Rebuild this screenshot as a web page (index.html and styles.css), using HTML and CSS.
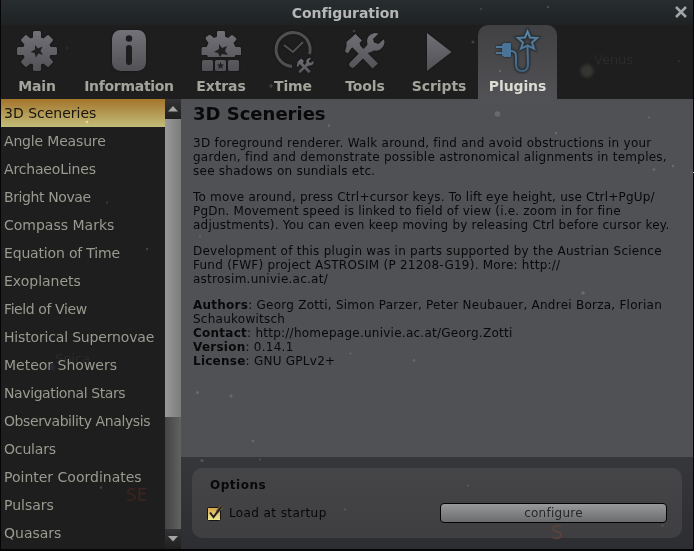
FILE: index.html
```
<!DOCTYPE html>
<html lang="en">
<head>
<meta charset="utf-8">
<title>Configuration</title>
<link rel="stylesheet" href="styles.css">
</head>
<body>
<svg width="0" height="0" class="defs">
  <defs>
    <linearGradient id="metal" gradientUnits="userSpaceOnUse" x1="0" y1="3" x2="0" y2="45"><stop offset="0" stop-color="#727278"/><stop offset="1" stop-color="#505055"/></linearGradient>
    <linearGradient id="blue" gradientUnits="userSpaceOnUse" x1="0" y1="3" x2="0" y2="45"><stop offset="0" stop-color="#5d86a7"/><stop offset="1" stop-color="#41637f"/></linearGradient>
    <g id="tools">
      <path d="M11.500 37.500L29 20" stroke="url(#metal)" stroke-width="6.500" stroke-linecap="round"/>
      <path d="M4 24.500L5.500 19L5.500 15L14.500 7L21 13.500L18.500 16L19.500 19L37 36.500L31.500 41.500L14 23L11.500 20.500L10 21.500L7 26.500Z" fill="url(#metal)"/>
      <path d="M37.500 6.500L33.500 6C28 7.500 25 11 26.500 17L25 22L29 25.500L33 23.500C39 24.500 43.500 20 43.500 14L42.500 12.500L37.500 17L33 15.500L32 12Z" fill="url(#metal)"/>
    </g>
  </defs>
</svg>
<div class="window">
  <header class="title"><h1>Configuration</h1>
    <svg class="close" width="12" height="12" viewBox="0 0 12 12"><path d="M1 1L11 11M11 1L1 11" stroke="#a4a7a7" stroke-width="2.500"/></svg>
  </header>
  <nav class="tabs">
    <div class="tab">
      <svg width="48" height="48" viewBox="0 0 48 48"><g fill="url(#metal)"><circle cx="24" cy="24" r="14"/><rect x="20" y="4" width="8" height="40" rx="1.500"/><rect x="4" y="20" width="40" height="8" rx="1.500"/><path d="M9 13L13 9L19 14L29 14L35 9L39 13L34 19V29L39 35L35 39L29 34H19L13 39L9 35L14 29V19Z" stroke="url(#metal)" stroke-width="2" stroke-linejoin="round"/></g><path d="M22 18L25 21.500L29.500 19.500L27.500 24L30 28L25.500 26.500L23 30.500L21.500 26L17.500 25L22 22.500Z" fill="#202021"/></svg>
      <span>Main</span></div>
    <div class="tab info">
      <svg width="48" height="48" viewBox="0 0 48 48"><rect x="7" y="3" width="34" height="41" rx="8.500" fill="url(#metal)"/><circle cx="24" cy="11.500" r="3.200" fill="#1d1d1e"/><rect x="21" y="18" width="6" height="20" rx="3" fill="#1d1d1e"/></svg>
      <span>Information</span></div>
    <div class="tab">
      <svg width="48" height="48" viewBox="0 0 48 48"><g fill="url(#metal)"><path d="M4.500 28V21.500Q4.500 20 6 20H9.500L11.500 16L9 12.500Q8 11 9 10L12 8Q13 7.500 14 8.500L17 11L20 9.500V5Q20 4 21.500 4H26.500Q28 4 28 5V9.500L31 11L34 8.500Q35 7.500 36 8.500L39 11Q40 12 39 13L36.500 16L38.500 20H42.500Q44 20 44 21.500V28H38.500L37.500 30H11L10 28Z"/><rect x="5" y="33" width="11" height="11" rx="1.500"/><rect x="18" y="33" width="11" height="11" rx="1.500"/><rect x="31" y="33" width="11" height="11" rx="1.500"/></g><path d="M22 17L25 21L30 19L28 24L31 28L25 27L23 30L21 26L17 25L22 22ZM23.500 35L24.500 37.500H27L25 39.500L26 42L23.500 40.500L21 42L22 39.500L20 37.500H22.500Z" fill="#202021"/></svg>
      <span>Extras</span></div>
    <div class="tab">
      <svg width="48" height="48" viewBox="0 0 48 48"><g fill="none" stroke="#505053"><path d="M23 39.500A17 17 0 1 1 40.500 27" stroke-width="3"/><path d="M15 18L24 25L34 15" stroke-width="2"/></g><use href="#tools" transform="translate(26 28.500) scale(.43)"/></svg>
      <span>Time</span></div>
    <div class="tab">
      <svg width="48" height="48" viewBox="0 0 48 48" fill="none"><use href="#tools"/></svg>
      <span>Tools</span></div>
    <div class="tab scripts">
      <svg width="48" height="48" viewBox="0 0 48 48"><path d="M12 6L36.500 25L12 44Z" fill="url(#metal)"/></svg>
      <span>Scripts</span></div>
    <div class="tab active">
      <svg width="48" height="48" viewBox="0 0 48 48"><g fill="none" stroke="#2c3e4c" stroke-width="4" opacity=".5"><path d="M17 24Q22 24 22 29V37Q22 44 28 44Q34 44 34 37V20"/><path d="M33.500 4.500L36 10.500L43 11L38 15.500L40 21.500L33.500 18.500L27 21.500L29 15.500L24 11L31 10.500Z"/></g><g fill="none" stroke="url(#blue)" stroke-width="2"><path d="M17 24Q22 24 22 29V37Q22 44 28 44Q34 44 34 37L33.500 20"/><path d="M33.500 4.500L36 10.500L43 11L38 15.500L40 21.500L33.500 18.500L27 21.500L29 15.500L24 11L31 10.500Z"/><path d="M2 20H9M2 26H9"/></g><path d="M8 17.500L10 16H17V30H10L8 28.500Z" fill="#4a7497"/></svg>
      <span>Plugins</span></div>
  </nav>
  <main class="content">
    <ul class="list">
      <li class="selected">3D Sceneries</li><li class="snug">Angle Measure</li><li class="snug">ArchaeoLines</li><li class="tight">Bright Novae</li><li>Compass Marks</li><li class="snug">Equation of Time</li><li>Exoplanets</li><li class="tight">Field of View</li><li class="snug">Historical Supernovae</li><li>Meteor Showers</li><li class="tight">Navigational Stars</li><li class="tight">Observability Analysis</li><li class="snug">Oculars</li><li>Pointer Coordinates</li><li>Pulsars</li><li>Quasars</li>
    </ul>
    <div class="scrollbar">
      <div class="arrow"><svg width="10" height="6" viewBox="0 0 10 6"><path d="M0 5.500L5 0L10 5.500Z" fill="#a5a5a5"/></svg></div>
      <div class="track"><div class="thumb"></div></div>
      <div class="arrow"><svg width="10" height="6" viewBox="0 0 10 6"><path d="M0 0L5 5.500L10 0Z" fill="#a5a5a5"/></svg></div>
    </div>
    <section class="details">
      <article class="description">
        <h2>3D Sceneries</h2>
        <p>3D foreground renderer. Walk around, find and avoid obstructions in your<br>garden, find and demonstrate possible astronomical alignments in temples,<br>see shadows on sundials etc.</p>
        <p class="movement">To move around, press Ctrl+cursor keys. To lift eye height, use Ctrl+PgUp/<br>PgDn. Movement speed is linked to field of view (i.e. zoom in for fine<br>adjustments). You can even keep moving by releasing Ctrl before cursor key.</p>
        <p>Development of this plugin was in parts supported by the Austrian Science<br>Fund (FWF) project ASTROSIM (P 21208-G19). More: http://<br>astrosim.univie.ac.at/</p>
        <p><b>Authors</b>: Georg Zotti, Simon Parzer, Peter Neubauer, Andrei Borza, Florian<br>Schaukowitsch<br><b>Contact</b>: http://homepage.univie.ac.at/Georg.Zotti<br><b>Version</b>: 0.14.1<br><b>License</b>: GNU GPLv2+</p>
      </article>
      <footer class="footer">
        <div class="options">
          <h3>Options</h3>
          <div class="row">
            <label class="check"><svg width="17" height="17" viewBox="0 0 17 17"><defs><linearGradient id="gold" x2="0" y2="1"><stop stop-color="#d8a34b"/><stop offset="1" stop-color="#f0eb92"/></linearGradient></defs><rect x=".5" y="2.500" width="13" height="13" rx="1" fill="url(#gold)" stroke="#151515"/><path d="M10 7L14.500 1.500" fill="none" stroke="#8b7444" stroke-width="3.500"/><path d="M3 7.500L6.500 12L14.500 1.500" fill="none" stroke="#202020" stroke-width="2"/></svg><span>Load at startup</span></label>
            <button class="configure">configure</button>
          </div>
        </div>
      </footer>
    </section>
  </main>
  <svg class="sky" width="694" height="551" viewBox="0 0 694 551">
    <defs><filter id="glow" x="-50%" y="-50%" width="200%" height="200%"><feGaussianBlur stdDeviation="1.500"/></filter></defs>
    <circle cx="587" cy="71" r="6.500" fill="#353532" filter="url(#glow)"/>
    <circle cx="52" cy="367" r="3" fill="#35394f" opacity=".5" filter="url(#glow)"/>
    <text x="594" y="64" font-size="13" fill="#2b2b2d">Venus</text>
    <text x="55" y="363" font-size="13" class="ghost">Spica</text>
    <text x="126" y="501" font-size="17" fill="#3c2420">SE</text>
    <text x="551" y="539" font-size="19" fill="#5b423d">S</text>
    <g fill="#ddd" opacity=".18"><circle cx="497.500" cy="114" r="2.800"/><circle cx="473" cy="42" r="1.600"/><circle cx="354" cy="31" r="1.300"/><circle cx="271" cy="86" r="1.700"/><circle cx="548" cy="7" r="1.200"/><circle cx="481" cy="9" r="1"/><circle cx="679" cy="61" r=".8"/><circle cx="67" cy="48" r=".8"/><circle cx="500" cy="71" r="1.200"/><circle cx="329" cy="125.500" r="1.200"/><circle cx="556" cy="133" r="1.200"/><circle cx="654" cy="169.500" r="1.300"/><circle cx="673" cy="166" r="1.200"/><circle cx="649" cy="117.500" r="1"/><circle cx="583" cy="293" r="1.800"/><circle cx="197.500" cy="392.500" r="1.500"/><circle cx="231" cy="396" r="1.600"/><circle cx="414" cy="360.500" r="1.300"/><circle cx="350.500" cy="353.500" r="1"/><circle cx="253" cy="441" r="1.300"/><circle cx="202" cy="460.500" r="1.600"/><circle cx="260" cy="459.500" r="1"/><circle cx="345" cy="509.500" r="1"/><circle cx="468" cy="485.500" r="1"/><circle cx="662.500" cy="525.500" r="1"/><circle cx="101" cy="487.500" r="1.300"/><circle cx="147" cy="249" r="1.200"/><circle cx="107" cy="202.500" r="1"/><circle cx="200" cy="236.500" r="1"/></g>
    <circle cx="87" cy="122" r="1.300" fill="#f5d582"/><path d="M693 172.500H694" stroke="#ccc"/>
  </svg>
</div>
</body>
</html>
```
FILE: styles.css
```
* { box-sizing: border-box; }
body { margin: 0; background: #050507; font-family: "DejaVu Sans", sans-serif; overflow: hidden; }
h1, h2, h3, p, ul { margin: 0; padding: 0; }
.defs, .sky { position: absolute; top: 0; left: 0; pointer-events: none; }
.window { position: relative; width: 694px; height: 551px; padding: 0 1px 2px; display: flex; flex-direction: column; }
.title { height: 25px; flex: none; display: flex; align-items: center; justify-content: center; padding-right: 3px; background: linear-gradient(#272d30, #1f2223); color: #b6b7b7; position: relative; }
.title h1 { font-size: 14px; line-height: 24px; font-weight: bold; letter-spacing: -.05px; }
.close { position: absolute; right: 6px; top: 6px; }
.tabs { height: 74px; flex: none; display: flex; background: #1e1e1e; }
.tab { width: 72px; flex: none; display: flex; flex-direction: column; align-items: center; padding-top: 2px; color: #a3a49b; font-size: 14px; font-weight: bold; line-height: 22px; letter-spacing: -.1px; white-space: nowrap; }
.tab svg { display: block; flex: none; filter: drop-shadow(0 0 1px #111); }
.tab.info { width: 112px; letter-spacing: -.3px; }
.tab.scripts { width: 76px; }
.tab.active { width: 79px; margin-left: 1px; border-radius: 10px 10px 0 0; background: linear-gradient(#414143, #525256); color: #dadbd2; }
.content { height: 450px; display: flex; }
.list { width: 164px; flex: none; list-style: none; background: #1e1e1e; overflow: hidden; }
.list li { height: 28px; padding-left: 3px; font-size: 14px; line-height: 28px; color: #999a90; white-space: nowrap; }
.list .snug { letter-spacing: -.17px; }
.list .tight { letter-spacing: -.4px; }
.list .selected { background: linear-gradient(#a4742a, #c2bd7a); color: #17150f; }
.scrollbar { width: 16px; flex: none; display: flex; flex-direction: column; }
.arrow { height: 20px; display: flex; align-items: center; justify-content: center; background: linear-gradient(#343436, #1f1f20); }
.track { flex: 1; background: linear-gradient(90deg, #444, #626262); }
.thumb { height: 298px; background: linear-gradient(90deg, #999, #7c7c7c); }
.details { flex: 1; display: flex; flex-direction: column; min-width: 0; }
.description { height: 358px; padding: 4px 0 0 12px; background: #505155; color: #09090a; font-size: 12px; line-height: 14px; white-space: nowrap; }
.description h2 { font-size: 18px; line-height: 21px; margin-bottom: 12px; }
.description p { margin-bottom: 12px; letter-spacing: .25px; }
.description .movement { letter-spacing: .21px; }
.footer { flex: 1; padding: 11px 11px; background: linear-gradient(#36373b, #2d2e32); }
.options { height: 70px; border-radius: 10px; background: linear-gradient(#454547, #3f3f41); padding: 9px 15px; color: #080808; }
.options h3 { font-size: 12px; line-height: 16px; padding-left: 3px; letter-spacing: .5px; }
.row { display: flex; justify-content: space-between; align-items: center; height: 20px; margin-top: 10px; }
.check { display: flex; align-items: center; gap: 5px; font-size: 12px; letter-spacing: .4px; }
.configure { width: 227px; height: 20px; padding: 0; border: 1px solid #030303; border-radius: 4px; background: linear-gradient(#98999b, #6b6c6e); color: #272727; font: 12px/16px "DejaVu Sans", sans-serif; letter-spacing: .25px; }
.sky text { font-family: "DejaVu Sans", sans-serif; }
.sky .ghost { fill: #2a2a2b; mix-blend-mode: lighten; }
```
